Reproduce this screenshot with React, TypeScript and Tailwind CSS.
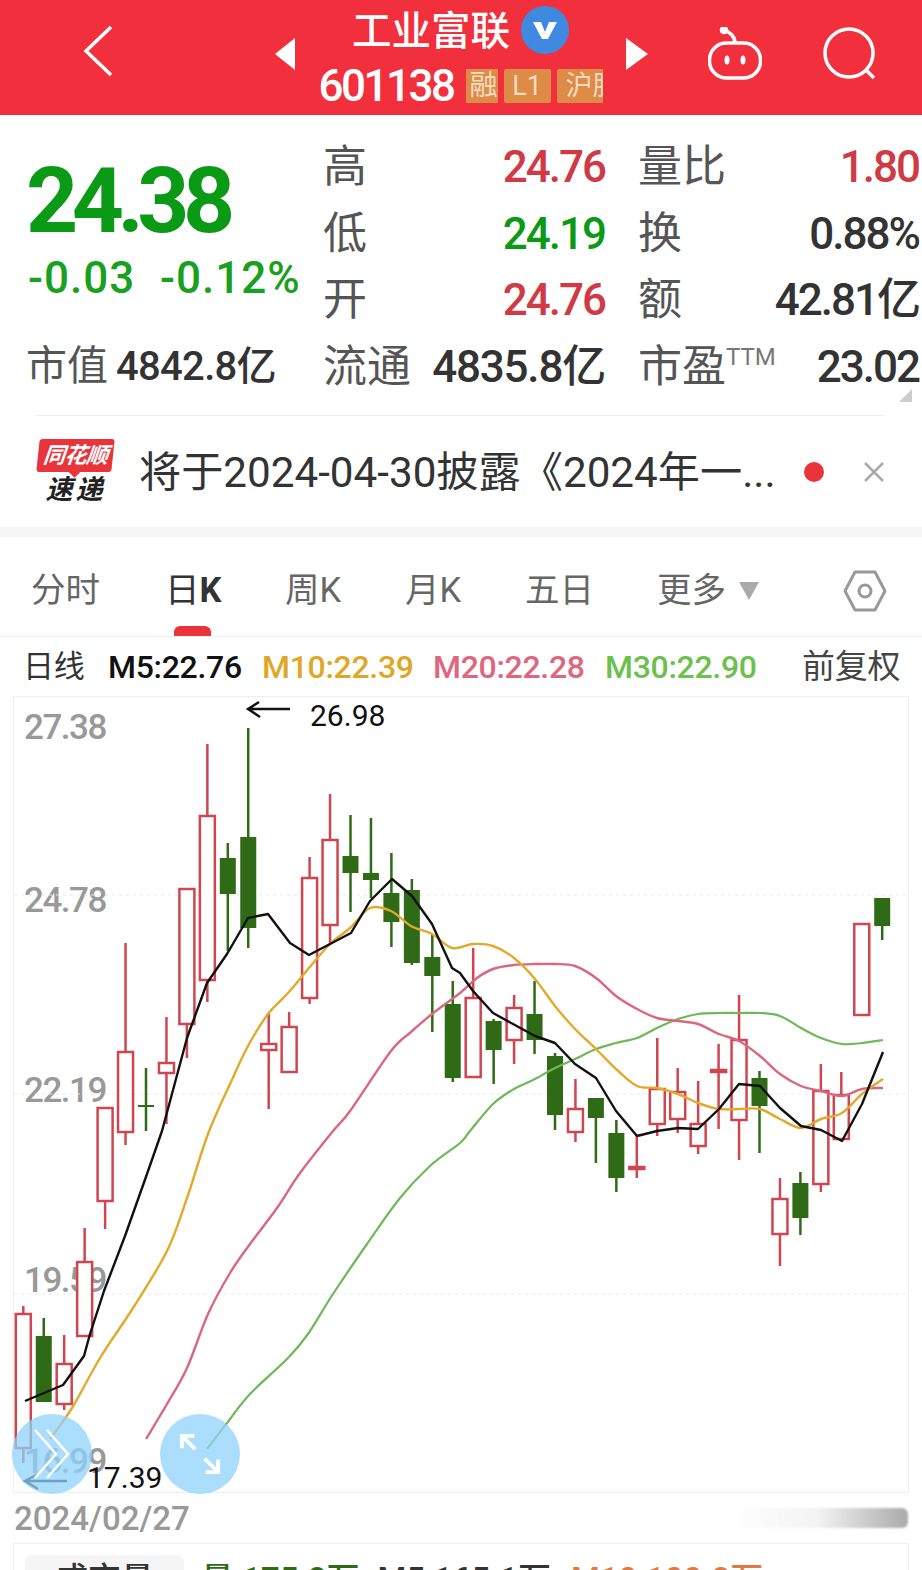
import React from 'react';

// [high, body top, body bottom, low, isUp]
const candles: [number, number, number, number, boolean][] = [
  [1305, 1313, 1447, 1462, true],
  [1317, 1335, 1401, 1401, false],
  [1334, 1363, 1403, 1409, true],
  [1227, 1261, 1335, 1335, true],
  [1107, 1107, 1200, 1228, true],
  [942, 1051, 1131, 1144, true],
  [1067, 1104, 1106, 1130, false],
  [1016, 1062, 1072, 1123, true],
  [888, 888, 1023, 1057, true],
  [743, 815, 979, 1001, true],
  [842, 857, 893, 950, false],
  [727, 836, 927, 947, false],
  [1012, 1043, 1049, 1108, true],
  [1011, 1026, 1071, 1072, true],
  [856, 877, 997, 1003, true],
  [793, 839, 924, 943, true],
  [814, 855, 872, 911, false],
  [817, 872, 879, 897, false],
  [852, 892, 921, 946, false],
  [878, 889, 962, 964, false],
  [933, 956, 975, 1031, false],
  [980, 1003, 1077, 1081, false],
  [947, 997, 1076, 1076, true],
  [1018, 1020, 1049, 1083, false],
  [994, 1007, 1039, 1063, true],
  [980, 1013, 1039, 1053, false],
  [1052, 1055, 1114, 1129, false],
  [1078, 1108, 1131, 1141, true],
  [1097, 1097, 1117, 1162, false],
  [1119, 1132, 1177, 1191, false],
  [1135, 1166, 1168, 1177, true],
  [1037, 1088, 1123, 1135, true],
  [1067, 1091, 1118, 1132, true],
  [1080, 1123, 1145, 1153, true],
  [1043, 1069, 1071, 1128, true],
  [994, 1039, 1119, 1159, true],
  [1070, 1077, 1105, 1152, false],
  [1177, 1198, 1233, 1265, true],
  [1171, 1182, 1217, 1234, false],
  [1063, 1090, 1183, 1191, true],
  [1071, 1094, 1138, 1138, true],
  [923, 923, 1014, 1014, true],
  [897, 897, 925, 939, false],
];

const ma5 =
  '25,1400 63,1384 84,1355 90,1333 104,1290 125,1235 147,1173 162,1130 187,1037 207,982 227,953 248,917 268,913 290,942 309,954 330,943 351,932 370,900 392,878 412,895 432,923 452,967 460,972 473,990 493,1012 513,1023 535,1035 555,1042 575,1063 596,1077 616,1110 637,1135 657,1130 678,1127 698,1128 719,1108 739,1083 760,1085 780,1107 801,1125 821,1129 842,1140 862,1103 883,1051';
const ma10 =
  '50,1438 72,1407 100,1357 133,1307 167,1250 187,1197 208,1133 230,1083 248,1045 268,1013 288,992 309,967 330,943 350,927 370,907 391,910 411,925 432,933 452,947 473,943 493,945 514,957 535,978 555,1005 575,1028 596,1048 616,1068 637,1085 657,1087 678,1093 698,1102 719,1108 739,1108 760,1108 780,1118 801,1127 821,1118 842,1112 862,1093 883,1078';
const ma20 =
  '146,1438 167,1403 187,1367 208,1313 230,1272 250,1243 277,1207 300,1172 333,1130 350,1110 391,1050 411,1031 432,1013 460,992 477,977 493,968 514,964 535,963 555,963 575,965 596,977 616,995 637,1008 657,1017 678,1020 698,1023 719,1033 739,1040 760,1055 780,1073 801,1085 821,1090 842,1095 862,1088 883,1087';
const ma30 =
  '207,1448 227,1422 250,1393 288,1357 308,1333 333,1293 367,1243 400,1197 430,1165 460,1142 470,1130 493,1103 514,1088 535,1078 555,1067 575,1058 596,1048 616,1042 637,1037 657,1027 678,1018 698,1013 719,1012 739,1012 760,1012 780,1015 801,1027 821,1037 842,1043 862,1042 883,1039';

const RED = '#cf4650';
const GREEN = '#2f6b17';

// catmull-rom through the points, the slower averages are smooth curves
function smooth(points: string) {
  const p = points.split(' ').map((s) => s.split(',').map(Number));
  let d = `M${p[0][0]} ${p[0][1]}`;
  for (let i = 0; i < p.length - 1; i++) {
    const a = p[Math.max(i - 1, 0)];
    const b = p[i];
    const c = p[i + 1];
    const e = p[Math.min(i + 2, p.length - 1)];
    d += ` C${b[0] + (c[0] - a[0]) / 6} ${b[1] + (c[1] - a[1]) / 6} ${c[0] - (e[0] - b[0]) / 6} ${c[1] - (e[1] - b[1]) / 6} ${c[0]} ${c[1]}`;
  }
  return d;
}

function QuoteRow({ label, value, color }: { label: string; value: string; color: string }) {
  return (
    <div className="flex h-[66.5px] items-center justify-between">
      <span className="text-[44px] text-[#555]">{label}</span>
      <span className={`text-[44px] font-medium tracking-[-2px] ${color}`}>{value}</span>
    </div>
  );
}

function KChart() {
  return (
    <svg viewBox="14 696 894 795" className="absolute inset-0 h-full w-full">
      {[894, 1093, 1293].map((y) => (
        <line key={y} x1="14" x2="908" y1={y} y2={y} stroke="#e8e8e8" strokeWidth="1" strokeDasharray="3 4" />
      ))}
      {candles.map(([high, top, bottom, low, up], i) => {
        const x = 23.3 + 20.45 * i;
        const c = up ? RED : GREEN;
        return (
          <g key={i}>
            <line x1={x} x2={x} y1={high} y2={top} stroke={c} strokeWidth="2.5" />
            <line x1={x} x2={x} y1={bottom} y2={low} stroke={c} strokeWidth="2.5" />
            {up ? (
              <rect x={x - 7.5} y={top} width="15" height={bottom - top} fill="white" stroke={c} strokeWidth="2.5" />
            ) : (
              <rect x={x - 8} y={top} width="16" height={bottom - top} fill={c} />
            )}
          </g>
        );
      })}
      <path d={smooth(ma30)} fill="none" stroke="#6fb858" strokeWidth="2.2" />
      <path d={smooth(ma20)} fill="none" stroke="#d9687f" strokeWidth="2.4" />
      <path d={smooth(ma10)} fill="none" stroke="#e3a92a" strokeWidth="2.4" />
      <polyline points={ma5} fill="none" stroke="#111" strokeWidth="2.4" strokeLinejoin="round" />
      {/* hand drawn arrows */}
      <path d="M290 708 H248 M259 701 L248 708 L260 716" fill="none" stroke="#111" strokeWidth="2.5" />
      <path d="M67 1480 H25 M38 1473 L25 1480 L38 1488" fill="none" stroke="#111" strokeWidth="2.5" />
    </svg>
  );
}

export default function App() {
  return (
    <div className="h-[1570px] w-[922px] overflow-hidden bg-white font-['Roboto','Noto_Sans_CJK_SC',sans-serif] text-[42px] leading-none text-[#333]">
      {/* top bar */}
      <header className="flex h-[115px] items-start bg-[#f2303d] text-white">
        <svg viewBox="0 0 30 52" className="mt-[25px] ml-[83px] h-[52px] w-[30px]" fill="none" stroke="white" strokeWidth="3.5">
          <path d="M28 2 L3 26 L28 50" />
        </svg>
        <svg viewBox="0 0 20 32" className="mt-[38px] ml-[162px] h-[32px] w-[20px]" fill="white">
          <path d="M20 0 V32 L0 16 Z" />
        </svg>
        <div className="mt-[7px] flex w-[331px] flex-col items-center">
          <div className="flex h-[50px] items-center">
            <span className="text-[39.5px] font-medium">工业富联</span>
            <span className="mb-[4px] ml-[11px] flex h-[48px] w-[48px] items-center justify-center rounded-full bg-[#3f8ae0]">
              <svg viewBox="0 0 24 20" className="h-[20px] w-[24px]" fill="white">
                <path d="M0 2 H8 L12 12 L16 2 H24 L15 19 H9 Z" />
              </svg>
            </span>
          </div>
          <div className="mt-[7px] flex items-center">
            <span className="text-[44px] font-medium tracking-[-2.5px]">601138</span>
            <span className="ml-[12px] flex h-[34px] w-[32px] items-center justify-end overflow-hidden bg-[#dd8b47] text-[28px] text-[#f6dcc0]">
              <span className="whitespace-nowrap">融</span>
            </span>
            <span className="ml-[6px] flex h-[34px] w-[47px] items-center justify-center rounded-[2px] bg-[#dd8b47] text-[27px] text-[#f6dcc0]">
              L1
            </span>
            <span className="ml-[6px] flex h-[34px] w-[46px] items-center overflow-hidden rounded-l-[2px] bg-[#dd8b47] pl-[9px] text-[27px] text-[#f6dcc0]">
              <span className="whitespace-nowrap">沪股</span>
            </span>
          </div>
        </div>
        <svg viewBox="0 0 22 32" className="mt-[38px] h-[32px] w-[22px]" fill="white">
          <path d="M0 0 V32 L22 16 Z" />
        </svg>
        <svg viewBox="708 28 54 54" className="mt-[27px] ml-[60px] h-[54px] w-[54px]" fill="none" stroke="white" strokeWidth="3.5">
          <rect x="709.5" y="44" width="51" height="35" rx="17" />
          <path d="M735 44 C735 37 730 34 725 31" />
          <circle cx="724" cy="31" r="2.5" fill="white" />
          <ellipse cx="727" cy="61" rx="2.5" ry="4.5" fill="white" stroke="none" />
          <ellipse cx="743" cy="61" rx="2.5" ry="4.5" fill="white" stroke="none" />
        </svg>
        <svg viewBox="822 26 54 54" className="mt-[26px] ml-[60px] h-[54px] w-[54px]" fill="none" stroke="white" strokeWidth="3.5">
          <circle cx="849" cy="53" r="24" />
          <path d="M866 70 L874 78" />
        </svg>
      </header>

      {/* quote */}
      <section className="relative h-[300px] pt-[19px] pl-[26px]">
        <div className="flex">
          <div className="w-[297px]">
            <div className="mt-[17px] flex h-[100px] items-center text-[91px] font-bold tracking-[-6.5px] text-[#0b9a16]">
              24.38
            </div>
            <div className="mt-[2px] flex h-[50px] items-center pl-[2px] text-[44px] font-medium tracking-[1px] text-[#18a020]">
              <span className="w-[132px]">-0.03</span>
              <span>-0.12%</span>
            </div>
          </div>
          <div className="w-[282px]">
            <QuoteRow label="高" value="24.76" color="text-[#cf3a44]" />
            <QuoteRow label="低" value="24.19" color="text-[#0b9a16]" />
            <QuoteRow label="开" value="24.76" color="text-[#cf3a44]" />
          </div>
          <div className="ml-[33px] w-[281px]">
            <QuoteRow label="量比" value="1.80" color="text-[#cf3a44]" />
            <QuoteRow label="换" value="0.88%" color="text-[#333]" />
            <QuoteRow label="额" value="42.81亿" color="text-[#333]" />
          </div>
        </div>
        <div className="flex h-[66.5px] items-center">
          <div className="flex w-[297px] items-center">
            <span className="text-[41px] text-[#555]">市值</span>
            <span className="ml-[8px] text-[40px] font-medium tracking-[-0.7px]">4842.8亿</span>
          </div>
          <div className="flex w-[282px] items-center justify-between">
            <span className="text-[44px] text-[#555]">流通</span>
            <span className="text-[44px] font-medium tracking-[-1.2px]">4835.8亿</span>
          </div>
          <div className="ml-[33px] flex w-[281px] items-center justify-between">
            <span className="flex items-start text-[44px] text-[#555]">
              市盈<span className="text-[24px] text-[#777]">TTM</span>
            </span>
            <span className="text-[44px] font-medium tracking-[-2px]">23.02</span>
          </div>
        </div>
        <div className="absolute right-[10px] bottom-[13px] h-0 w-0 border-b-[13px] border-l-[13px] border-b-[#ccc] border-l-transparent" />
      </section>
      <div className="mx-[35px] w-[850px] border-t border-[#f0f0f0]" />

      {/* notice */}
      <div className="flex h-[111px] items-center bg-white pl-[38px]">
        <div className="relative w-[75px]">
          <div className="flex h-[33px] items-center justify-center rounded-[3px] bg-[#e8343a] -skew-x-6">
            <span className="text-[22px] font-bold italic tracking-[-0.5px] text-white">同花顺</span>
          </div>
          <div className="absolute top-[28px] left-[32px] h-[9px] w-[9px] rotate-45 bg-[#e8343a]" />
          <div className="mt-[5px] text-center text-[27px] font-bold italic tracking-[3px] text-[#222]">速递</div>
        </div>
        <span className="mt-[3px] ml-[26px] w-[636px] text-[42.2px] whitespace-nowrap">将于2024-04-30披露《2024年一...</span>
        <span className="ml-[29px] h-[20px] w-[20px] rounded-full bg-[#e8343a]" />
        <svg viewBox="0 0 22 22" className="ml-[39px] h-[22px] w-[22px]" fill="none" stroke="#aaa" strokeWidth="2.5">
          <path d="M2 2 L20 20 M20 2 L2 20" />
        </svg>
      </div>
      <div className="h-[10px] bg-[#f6f6f6]" />

      {/* period tabs */}
      <nav className="relative flex h-[100px] items-center border-b border-[#eeeeee] pt-[8px] pl-[31px] text-[34.5px] text-[#666]">
        <span className="w-[134px]">分时</span>
        <span className="w-[120px] text-[#333]">
          日<b className="font-bold">K</b>
        </span>
        <span className="w-[120px]">周K</span>
        <span className="w-[120px]">月K</span>
        <span className="w-[132px]">五日</span>
        <span className="flex w-[186px] items-center">
          更多
          <svg viewBox="0 0 20 18" className="ml-[13px] h-[18px] w-[20px]" fill="#aaa">
            <path d="M0 0 H20 L10 18 Z" />
          </svg>
        </span>
        <svg viewBox="0 0 44 44" className="h-[44px] w-[44px]" fill="none" stroke="#999" strokeWidth="3" strokeLinejoin="round">
          <path d="M2 22 L12 3 H32 L42 22 L32 41 H12 Z" />
          <circle cx="22" cy="22" r="6" />
        </svg>
        <div className="absolute bottom-0 left-[174px] h-[10px] w-[37px] rounded-t-[6px] bg-[#e8343a]" />
      </nav>

      {/* moving averages */}
      <div className="flex h-[59px] items-center pr-[20px] pl-[23px] text-[32px] tracking-[-0.3px]">
        <span className="w-[85px] text-[31px] text-[#333]">日线</span>
        <span className="w-[154px] font-medium text-[#111]">M5:22.76</span>
        <span className="w-[171px] font-medium text-[#e0a726]">M10:22.39</span>
        <span className="w-[172px] font-medium text-[#e0657f]">M20:22.28</span>
        <span className="w-[197px] font-medium text-[#6cc04e]">M30:22.90</span>
        <span className="text-[33px] text-[#444]">前复权</span>
      </div>

      {/* chart */}
      <div className="relative ml-[13px] h-[797px] w-[896px] border border-[#eeeeee] text-[35px] font-medium tracking-[-1.5px] text-[#999]">
        <span className="absolute top-[13px] left-[10px]">27.38</span>
        <span className="absolute top-[186px] left-[10px]">24.78</span>
        <span className="absolute top-[376px] left-[10px]">22.19</span>
        <span className="absolute top-[566px] left-[10px]">19.59</span>
        <span className="absolute top-[747px] left-[10px]">16.99</span>
        <KChart />
        <span className="absolute top-[4px] left-[296px] text-[30px] font-normal tracking-[0px] text-[#111]">26.98</span>
        <span className="absolute top-[766px] left-[73px] text-[30px] font-normal tracking-[0px] text-[#111]">17.39</span>
        <div className="absolute top-[717px] left-[-2px] flex h-[80px] w-[80px] items-center justify-center rounded-full bg-[#8fd3fb]/75">
          <svg viewBox="0 0 40 50" className="h-[50px] w-[40px]" fill="none" stroke="white" strokeWidth="2.5">
            <path d="M3 1 L24 25 L3 49 M15 1 L36 25 L15 49" />
          </svg>
        </div>
        <div className="absolute top-[717px] left-[146px] flex h-[80px] w-[80px] items-center justify-center rounded-full bg-[#8fd3fb]/75">
          <svg viewBox="0 0 44 44" className="h-[42px] w-[42px]" fill="none" stroke="white" strokeWidth="4">
            <path d="M3 16 V3 H16 M3 3 L17 17 M41 28 V41 H28 M41 41 L27 27" />
          </svg>
        </div>
      </div>

      {/* date row */}
      <div className="flex h-[50px] items-center justify-between pr-[14px] pl-[14px] text-[33px] font-medium text-[#999]">
        <span>2024/02/27</span>
        <div className="h-[20px] w-[178px] rounded-r-[6px] bg-gradient-to-r from-transparent via-[#f3f3f3] to-[#aaaaaa] blur-[1px]" />
      </div>

      {/* volume panel, cut by the window */}
      <div className="ml-[13px] w-[896px] border border-[#eeeeee] pt-[11px] pl-[11px]">
        <div className="flex items-start text-[33px] font-medium">
          <span className="h-[50px] w-[159px] rounded-t-[8px] bg-[#f5f5f5] pt-[8px] text-center text-[#333]">成交量</span>
          <span className="ml-[17px] pt-[8px] text-[#2f6b17]">量 175.8万</span>
          <span className="ml-[18px] pt-[8px] text-[#333]">M5:165.1万</span>
          <span className="ml-[20px] pt-[8px] text-[#e07a45]">M10:100.8万</span>
        </div>
      </div>
    </div>
  );
}
